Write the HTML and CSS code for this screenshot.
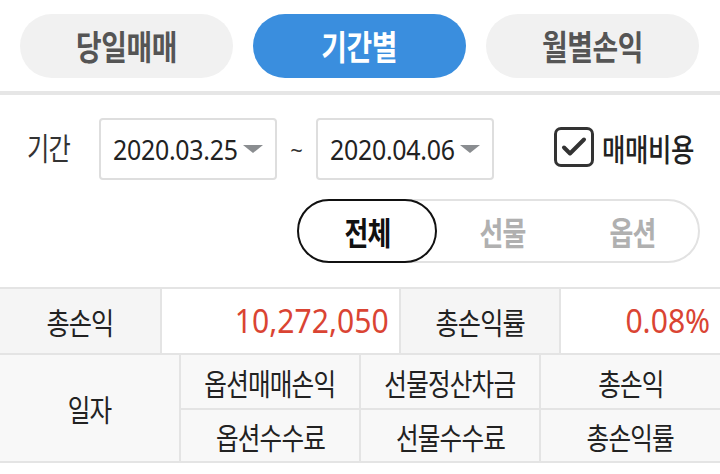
FILE: index.html
```html
<!DOCTYPE html>
<html lang="ko">
<head>
    <meta charset="UTF-8">
    <meta name="viewport" content="width=device-width, initial-scale=1.0">
    <title>기간별 손익</title>
    <link rel="stylesheet" href="styles.css">
</head>
<body>
    <div class="tabs">
        <div class="tab"><span class="txt">당일매매</span></div>
        <div class="tab active"><span class="txt">기간별</span></div>
        <div class="tab"><span class="txt">월별손익</span></div>
    </div>
    <div class="divider"></div>

    <div class="period-row">
        <span class="period-label txt">기간</span>
        <div class="date-box">
            <span class="date-text txt">2020.03.25</span>
            <span class="caret"></span>
        </div>
        <span class="tilde">~</span>
        <div class="date-box">
            <span class="date-text txt">2020.04.06</span>
            <span class="caret"></span>
        </div>
        <label class="fee-check">
            <span class="check-box">
                <svg width="30" height="30" viewBox="0 0 30 30">
                    <path d="M5 15.5 L11 21.5 L25 7.5" fill="none" stroke="#333" stroke-width="4" stroke-linecap="round" stroke-linejoin="round"/>
                </svg>
            </span>
            <span class="fee-text txt">매매비용</span>
        </label>
    </div>

    <div class="segment-row">
        <div class="segment">
            <div class="seg-item selected"><span class="txt">전체</span></div>
            <div class="seg-item"><span class="txt">선물</span></div>
            <div class="seg-item"><span class="txt">옵션</span></div>
        </div>
    </div>

    <div class="summary">
        <div class="cell label"><span class="txt">총손익</span></div>
        <div class="cell value"><span class="txt">10,272,050</span></div>
        <div class="cell label"><span class="txt">총손익률</span></div>
        <div class="cell value"><span class="txt">0.08%</span></div>
    </div>

    <div class="head-grid">
        <div class="hcell date-col"><span class="txt">일자</span></div>
        <div class="hcell"><span class="txt">옵션매매손익</span></div>
        <div class="hcell"><span class="txt">선물정산차금</span></div>
        <div class="hcell"><span class="txt">총손익</span></div>
        <div class="hcell"><span class="txt">옵션수수료</span></div>
        <div class="hcell"><span class="txt">선물수수료</span></div>
        <div class="hcell"><span class="txt">총손익률</span></div>
    </div>
</body>
</html>
```

FILE: styles.css
```css
body {
    margin: 0;
    width: 720px;
    background-color: #fff;
    font-family: "Noto Sans CJK KR", "Noto Sans", sans-serif;
    color: #222;
}

/* the app's font is a narrow one, squeeze the glyphs a little */
.txt {
    display: inline-block;
    transform: scaleX(0.82);
}

/* top tabs */
.tabs {
    display: flex;
    gap: 20px;
    padding: 14px 20px 0;
}
.tab {
    width: 213px;
    height: 64px;
    border-radius: 32px;
    background-color: #f1f1f1;
    color: #555;
    font-size: 34px;
    font-weight: 700;
    letter-spacing: -0.5px;
    line-height: 1;
    display: flex;
    align-items: center;
    justify-content: center;
}
.tab.active {
    background-color: #3a8ede;
    color: #fff;
}
.divider {
    margin-top: 13px;
    height: 4px;
    background-color: #e6e6e6;
}

/* period selector */
.period-row {
    display: flex;
    align-items: center;
    padding: 23px 0 0 27px;
}
.period-label {
    font-size: 31px;
    line-height: 1;
    letter-spacing: -1px;
    color: #333;
    transform: scaleX(0.78);
    transform-origin: left center;
    width: 72px;
    margin-top: -6px;
}
.date-box {
    width: 178px;
    height: 62px;
    box-sizing: border-box;
    border: 2px solid #dedede;
    border-radius: 4px;
    display: flex;
    align-items: center;
    padding-left: 12px;
}
.date-text {
    font-family: "Noto Sans", sans-serif;
    font-size: 28px;
    line-height: 1;
    letter-spacing: -0.3px;
    color: #222;
    transform: scaleX(0.89);
    transform-origin: left center;
    width: 130px;
}
.caret {
    width: 0;
    height: 0;
    border-left: 10px solid transparent;
    border-right: 10px solid transparent;
    border-top: 8px solid #8a8d90;
}
.tilde {
    width: 39px;
    text-align: center;
    font-family: "Noto Sans", sans-serif;
    font-size: 22px;
    color: #333;
}
.fee-check {
    display: flex;
    align-items: center;
    margin-left: 60px;
    margin-top: -4px;
}
.check-box {
    width: 40px;
    height: 40px;
    box-sizing: border-box;
    border: 3px solid #333;
    border-radius: 7px;
    display: flex;
    align-items: center;
    justify-content: center;
}
.fee-text {
    margin-left: 8px;
    font-size: 31px;
    line-height: 1;
    font-weight: 500;
    letter-spacing: -0.5px;
    color: #222;
    transform-origin: left center;
}

/* futures / options filter */
.segment-row {
    display: flex;
    justify-content: flex-end;
    padding: 19px 20px 0 0;
}
.segment {
    width: 403px;
    height: 64px;
    box-sizing: border-box;
    border: 2px solid #e2e2e2;
    border-radius: 32px;
    display: flex;
}
.seg-item {
    flex: 1;
    display: flex;
    align-items: center;
    justify-content: center;
    font-size: 32px;
    line-height: 1;
    font-weight: 700;
    letter-spacing: -1px;
    color: #b0b0b0;
}
.seg-item .txt {
    transform: scaleX(0.81);
}
.seg-item.selected {
    flex: 0 0 136px;
    margin: -2px 0 -2px -2px;
    border: 2px solid #111;
    border-radius: 32px;
    background-color: #fff;
    color: #111;
}

/* summary table */
.summary {
    margin-top: 24px;
    display: grid;
    grid-template-columns: 160px 239px 160px 161px;
    border-top: 2px solid #e4e4e4;
    border-bottom: 2px solid #e4e4e4;
}
.cell {
    height: 64px;
    display: flex;
    align-items: center;
    border-left: 2px solid #e4e4e4;
    box-sizing: border-box;
    line-height: 1;
}
.cell:first-child {
    border-left: none;
}
.cell.label {
    justify-content: center;
    background-color: #f5f5f5;
    font-size: 30px;
    letter-spacing: -1px;
    color: #222;
}
.cell.label .txt {
    transform: scaleX(0.84);
}
.cell.value {
    justify-content: flex-end;
    padding-right: 10px;
    background-color: #fff;
    font-family: "Noto Sans", sans-serif;
    font-size: 32px;
    color: #da4433;
}
.cell.value .txt {
    transform: scaleX(0.94);
    transform-origin: right center;
}

/* column headers */
.head-grid {
    display: grid;
    grid-template-columns: 179px 180px 180px 181px;
    grid-template-rows: 53px 53px;
    background-color: #f8f8f8;
    border-bottom: 2px solid #e4e4e4;
}
.hcell {
    display: flex;
    align-items: center;
    justify-content: center;
    font-size: 30px;
    line-height: 1;
    letter-spacing: -1px;
    color: #222;
    border-left: 2px solid #e4e4e4;
}
.hcell .txt {
    transform: scaleX(0.82);
}
.hcell:nth-child(n+5) {
    border-top: 2px solid #e4e4e4;
}
.hcell.date-col {
    grid-row: span 2;
    border-left: none;
}
```
